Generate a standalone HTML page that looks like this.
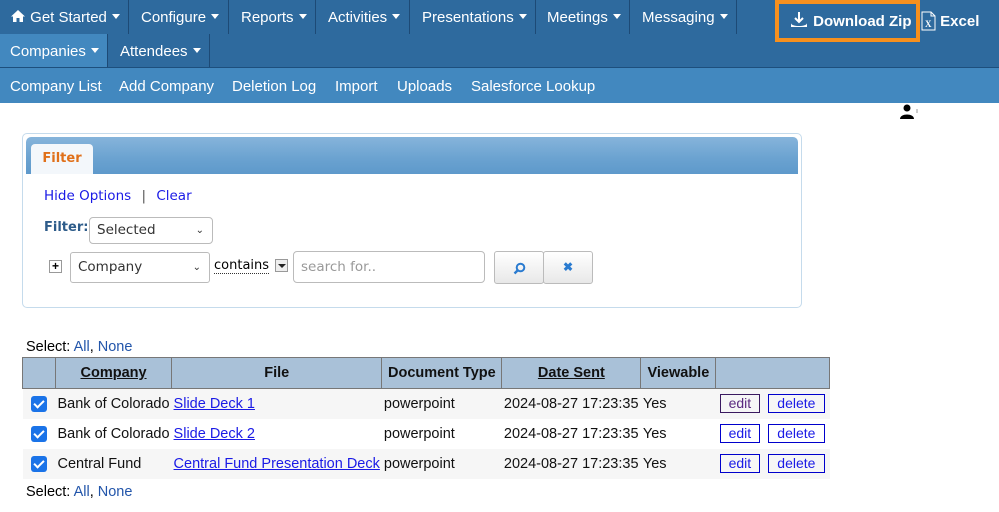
<!DOCTYPE html>
<html><head><style>
*{margin:0;padding:0;box-sizing:border-box}
body{width:999px;height:512px;background:#fff;font-family:"Liberation Sans",Arial,sans-serif;position:relative;overflow:hidden;font-size:14.5px}
.a{position:absolute}
.nav1{left:0;top:0;width:999px;height:68px;background:#2e6a9e;border-bottom:1px solid #1d4f7d}
.nav1 .it{position:absolute;top:0;height:34px;line-height:35px;color:#fff;font-size:15px;border-right:1px solid #1d4a76;padding-left:10px}
.nav1 .it2{top:34px;height:33px;line-height:35px}
.car{display:inline-block;border-left:4.5px solid transparent;border-right:4.5px solid transparent;border-top:5px solid #fff;vertical-align:middle;margin-left:5px;margin-top:-3px}
.nav3{left:0;top:68px;width:999px;height:35px;background:#4288bf;color:#fff;font-size:15px}
.nav3 span{position:absolute;top:9px}
.panel{left:22px;top:133px;width:780px;height:175px;border:1px solid #c5dbec;border-radius:5px}
.hdr{left:3px;top:3px;width:772px;height:37px;border-radius:5px 5px 0 0;background:linear-gradient(#86b4db,#6aa2d0 60%,#5e99cb)}
.tab{left:5px;top:7px;width:62px;height:30px;background:#f3f7fb;border-radius:4px 4px 0 0;color:#e0701a;font-weight:bold;font-family:"DejaVu Sans",sans-serif;font-size:13px;line-height:30px;text-align:center}
.lk{color:#1a1ae6}
.sel{background:#fff;border:1px solid #bbb;border-radius:4px;font-family:"DejaVu Sans",sans-serif;font-size:13.5px;color:#333;padding-left:7px}
table{position:absolute;left:22px;top:357px;border-collapse:collapse;font-size:14.5px}
th{background:#a9c1d8;border:1px solid #777;height:31px;font-weight:bold;color:#111;padding:0}
td{height:30px;padding:0 2px;white-space:nowrap;color:#111}
tr.o td{background:#f6f6f6}
.cb{display:inline-block;width:16px;height:16px;background:#1a73e8;border-radius:3px;margin-left:6px;vertical-align:middle;position:relative}
.cb:after{content:"";position:absolute;left:5px;top:2px;width:4px;height:8px;border:solid #fff;border-width:0 2px 2px 0;transform:rotate(45deg)}
.btn{position:absolute;top:5px;border:1px solid #0000cc;color:#1a1ae6;line-height:17px;font-size:14px;text-align:center;height:19px}
a{color:#1a1ae6;text-decoration:underline}
</style></head><body>
<div class="a nav1">
<div class="it" style="left:0;width:129px"><svg width="16" height="14" viewBox="0 0 16 14" style="vertical-align:-1px"><path d="M8 1L1 7.5h2V13h3.5V9h3v4H13V7.5h2z" fill="#fff"/></svg> Get Started<span class="car"></span></div>
<div class="it" style="left:129px;width:100px;padding-left:12px">Configure<span class="car"></span></div>
<div class="it" style="left:229px;width:87px;padding-left:12px">Reports<span class="car"></span></div>
<div class="it" style="left:316px;width:94px;padding-left:12px">Activities<span class="car"></span></div>
<div class="it" style="left:410px;width:126px;padding-left:12px">Presentations<span class="car"></span></div>
<div class="it" style="left:536px;width:94px;padding-left:11px">Meetings<span class="car"></span></div>
<div class="it" style="left:630px;width:107px;padding-left:12px">Messaging<span class="car"></span></div>
<div class="it it2" style="left:0;width:108px;background:#4288bf">Companies<span class="car"></span></div>
<div class="it it2" style="left:108px;width:102px;padding-left:12px">Attendees<span class="car"></span></div>
</div>
<div class="a" style="left:775px;top:0px;width:145px;height:42px;border:4px solid #f7901e"></div>
<div class="a" style="left:789px;top:11px;color:#fff;font-weight:bold;font-size:15px"><svg width="20" height="18" viewBox="0 0 20 18" style="vertical-align:-3px"><path d="M10 1v10M6 7l4 4 4-4" stroke="#fff" stroke-width="2" fill="none"/><path d="M2 12c0 4 16 4 16 0v4H2z" fill="#fff"/></svg> Download Zip</div>
<div class="a" style="left:921px;top:11px;color:#fff;font-weight:bold;font-size:15px"><svg width="15" height="20" viewBox="0 0 15 20" style="vertical-align:-5px"><path d="M1 1h9l4 4v14H1z M10 1v4h4" stroke="#fff" fill="none"/><text x="4" y="16" font-size="9" fill="#fff" font-family="Liberation Serif">X</text></svg> Excel</div>
<div class="a nav3"><span style="left:10px;top:10px">Company List</span><span style="left:119px;top:10px">Add Company</span><span style="left:232px;top:10px">Deletion Log</span><span style="left:335px;top:10px">Import</span><span style="left:397px;top:10px">Uploads</span><span style="left:471px;top:10px">Salesforce Lookup</span></div>
<svg class="a" style="left:900px;top:104px" width="18" height="15" viewBox="0 0 18 15"><circle cx="7" cy="4" r="3.5" fill="#000"/><path d="M0 15c0-6 14-6 14 0z" fill="#000"/><path d="M17 5v4" stroke="#999"/></svg>
<div class="a panel">
<div class="a hdr"><div class="a tab">Filter</div></div>
<div class="a" style="left:21px;top:54px;font-family:'DejaVu Sans',sans-serif;font-size:13.5px"><span class="lk">Hide Options</span> <span style="color:#555;margin:0 6px">|</span> <span class="lk">Clear</span></div>
<div class="a" style="left:21px;top:86px;font-family:'DejaVu Sans',sans-serif;font-size:13px;font-weight:bold;color:#2e5c8a">Filter:</div>
<div class="a sel" style="left:66px;top:83px;width:124px;height:27px;line-height:25px">Selected<span style="position:absolute;right:8px;font-size:10px">⌄</span></div>
<div class="a" style="left:26px;top:126px;width:13px;height:13px;border:1px solid #999;font-size:12px;line-height:10px;text-align:center;font-weight:bold">+</div>
<div class="a sel" style="left:47px;top:118px;width:140px;height:31px;line-height:29px;border-radius:3px">Company<span style="position:absolute;right:8px;font-size:10px">⌄</span></div>
<div class="a" style="left:191px;top:124px;font-family:'DejaVu Sans',sans-serif;font-size:13px;border-bottom:1px dotted #333">contains</div>
<div class="a" style="left:252px;top:125px;width:13px;height:13px;border:1px solid #999;background:#eee"><div style="margin:4px 2px;border-left:4px solid transparent;border-right:4px solid transparent;border-top:4px solid #222"></div></div>
<div class="a sel" style="left:270px;top:117px;width:192px;height:32px;line-height:30px;color:#999">search for..</div>
<div class="a" style="left:471px;top:117px;width:50px;height:33px;border:1px solid #bbb;border-radius:3px;background:linear-gradient(#fff,#e8e8e8)"><svg class="a" style="left:18px;top:10px" width="13" height="13" viewBox="0 0 13 13"><circle cx="7.5" cy="5.5" r="3.8" stroke="#2a7bd0" stroke-width="2" fill="none"/><path d="M5 8L1.5 11.5" stroke="#2a7bd0" stroke-width="2.4"/></svg></div>
<div class="a" style="left:520px;top:117px;width:50px;height:33px;border:1px solid #bbb;border-radius:3px;background:linear-gradient(#fff,#e8e8e8);text-align:center;line-height:31px;color:#2a7bd0;font-weight:bold;font-size:12px">✖</div>
</div>
<div class="a" style="left:26px;top:339px">Select: <span style="color:#2255aa">All</span>, <span style="color:#2255aa">None</span></div>
<table>
<tr><th style="width:33px"></th><th style="width:115px"><u>Company</u></th><th style="width:210px">File</th><th style="width:120px">Document Type</th><th style="width:139px"><u>Date Sent</u></th><th style="width:75px">Viewable</th><th style="width:114px"></th></tr>
<tr class="o"><td><span class="cb"></span></td><td>Bank of Colorado</td><td><a>Slide Deck 1</a></td><td>powerpoint</td><td>2024-08-27 17:23:35</td><td>Yes</td><td style="position:relative"><span class="btn" style="left:4px;width:40px;color:#5a2a80;border-color:#3a1a60">edit</span><span class="btn" style="left:52px;width:57px">delete</span></td></tr>
<tr><td><span class="cb"></span></td><td>Bank of Colorado</td><td><a>Slide Deck 2</a></td><td>powerpoint</td><td>2024-08-27 17:23:35</td><td>Yes</td><td style="position:relative"><span class="btn" style="left:4px;width:40px">edit</span><span class="btn" style="left:52px;width:57px">delete</span></td></tr>
<tr class="o"><td><span class="cb"></span></td><td>Central Fund</td><td><a>Central Fund Presentation Deck</a></td><td>powerpoint</td><td>2024-08-27 17:23:35</td><td>Yes</td><td style="position:relative"><span class="btn" style="left:4px;width:40px">edit</span><span class="btn" style="left:52px;width:57px">delete</span></td></tr>
</table>
<div class="a" style="left:26px;top:484px">Select: <span style="color:#2255aa">All</span>, <span style="color:#2255aa">None</span></div>
</body></html>
